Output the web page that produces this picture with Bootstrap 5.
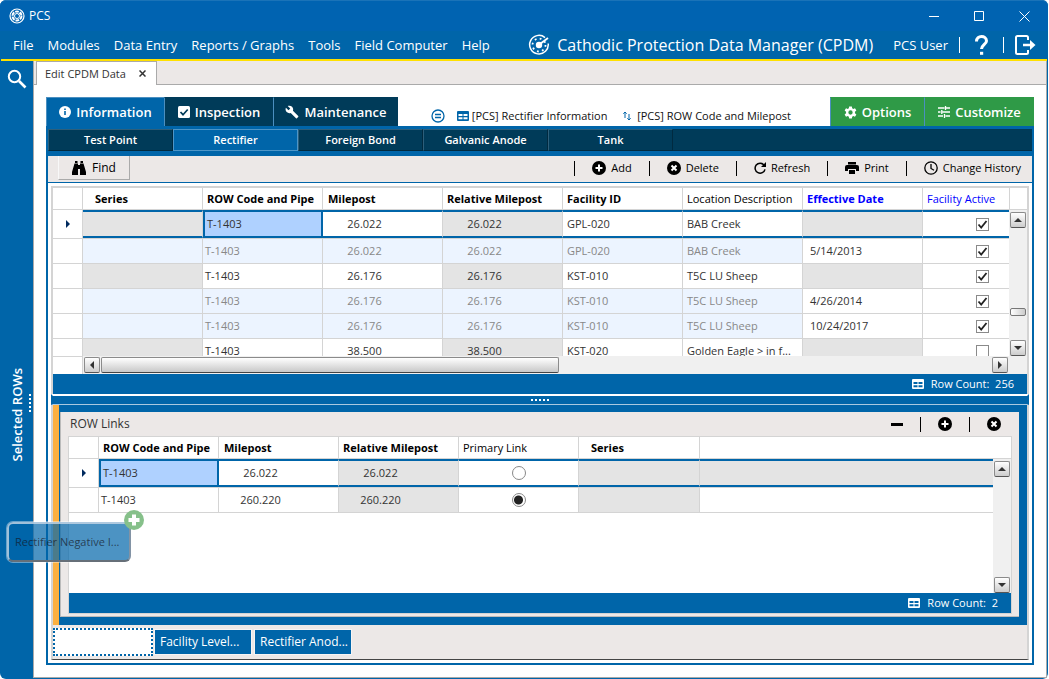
<!DOCTYPE html>
<html lang="en">
<head>
<meta charset="utf-8">
<meta name="viewport" content="width=device-width, initial-scale=1">
<title>PCS</title>
<link href="https://cdn.jsdelivr.net/npm/bootstrap@5.3.0/dist/css/bootstrap.min.css" rel="stylesheet">
<style>
:root{--blue:#0065a9;--navy:#003b59;--panel:#ece8e7;--line:#d4d4d4;--off:#e4e4e4;--pale:#ecf4ff}
body{font-family:"Open Sans","Noto Sans",sans-serif;font-size:11px;line-height:16px;color:#333;background:#fff}
button{font-family:inherit;border:0;background:none;padding:0;color:inherit}
svg{display:block;flex:none}
.window{min-height:100vh;background:var(--blue);border-radius:6px;padding:0 1px 1px 1px;border-right:1px solid #fff}
.titlebar{height:31px;background:#0063b1;margin:0 -1px;padding:0 18px 0 9px;border-top:1px solid #1a73b8;border-radius:6px 6px 0 0;color:#fff;font-size:12px}
.caption-buttons{gap:34px}
.menubar{height:28px;color:#fff;font-size:13px;padding:0 11px 0 12px}
.menubar a{color:#fff;text-decoration:none;white-space:nowrap}
.menus{gap:14px}
.product{font-size:16px;gap:7px;white-space:nowrap;margin-right:20px}
.usertools{gap:11px}
.vr-white{width:1px;height:16px;background:#fff}
.workspace{border-top:2px solid #ffe000}
.sidebar{width:32px;flex:none;color:#fff;font-size:13px;font-weight:600;position:relative}
.sidebar .find-row{height:36px}
.vert{writing-mode:vertical-rl;transform:rotate(180deg);white-space:nowrap}
.grip-v{width:2px;height:18px;position:absolute;right:2px;top:54%;background:repeating-linear-gradient(#fff 0 2px,transparent 2px 4px)}
.spacer-a{flex:5}.spacer-b{flex:4}
.doc{background:#fff;border-left:1px solid #aaa;border-bottom:1px solid #aaa;border-right:1px solid #aaa;min-width:0}
.docstrip{height:24px;background:var(--panel);border-bottom:1px solid #aaa;padding-left:2px}
.doctab{height:24px;width:121px;background:#fff;border:1px solid #aaa;border-bottom:0;font-size:11px;padding:0 10px 0 8px;color:#333}
.docbody{padding:12px}
.maintab{height:29px;background:var(--navy);color:#fff;font-size:13px;font-weight:600;border-left:1px solid #4b8fc0;border-top:1px solid var(--navy);gap:5px;justify-content:center;white-space:nowrap;flex:none}
.maintab.on{background:var(--blue);border-top-color:#4b8fc0}
.w-info{width:118px}.w-insp{width:109px}.w-main{width:125px}
.maintab.green{background:#2f9a47;border-top-color:#2f9a47}
.w-opt{width:94px}.w-cus{width:110px}
.links{font-size:11px;color:#111;padding:8px 0 0 33px}
.links a{color:#111;text-decoration:none;white-space:nowrap}
.frame{border:2px solid var(--blue);border-top-width:3px}
.subtabs{background:var(--navy);border-bottom:1px solid #002c45;height:22px}
.subtab{width:125px;height:22px;color:#fff;font-weight:600;font-size:11px;border:1px solid #2d5f7b;border-right-color:#002a40;border-bottom-color:#002a40}
.subtab.on{background:var(--blue);border-color:#4d96c8}
.toolbar{border-top:5px solid var(--blue);border-bottom:1px solid var(--blue);background:var(--panel);height:32px;padding:0 11px 0 10px;color:#000;font-size:11px}
.btn-find{width:72px;height:24px;border-right:1px solid #aaa;border-bottom:1px solid #aaa;border-left:1px solid #f8f8f8;gap:6px}
.btn-find,.childhead{font-size:12px}
.tools{gap:17px;height:24px}
.tool{gap:5px;white-space:nowrap}
.vr-black{width:1px;height:15px;background:#000}
.gridbox{border:2px solid var(--line);border-bottom:0;margin:3px 3px 0 3px}
.clip{height:168px;overflow:hidden}
.sheet{width:100%;table-layout:fixed;border-collapse:separate;border-spacing:0;font-size:11px}
.sheet th{height:22px;font-weight:700;color:#000;padding:0 0 0 4px;border:0 solid var(--line);border-width:0 1px 1px 0;white-space:nowrap}
.sheet td{height:25px;padding:0 0 0 4px;border:0 solid var(--line);border-width:0 1px 1px 0;white-space:nowrap;overflow:hidden;line-height:16px}
.sheet th.plain{font-weight:400}
.sheet th.dated{color:#00f}
.sheet th.wide{padding-left:12px}
.sheet th.mid{padding-left:5px}
.sheet .code{padding-left:2px}
.sheet .num{padding:0 36px 0 0;text-align:center}
.sheet .date{padding-left:7px}
.sheet .tick{padding-left:33px;text-align:center}
.sheet .edge{border-right:0}
.off{background:var(--off)}
.pale td.p{background:var(--pale);color:#888}
.cur td{height:28px;border-top:2px solid var(--blue);border-bottom:2px solid var(--blue)}
.cur td.rowhead{border-top:0;border-bottom:0}
.cur td.sel{background:#afd1ff;border:2px solid var(--blue)}
.after td{height:26px;border-top:1px solid var(--line)}
.rowhead svg{margin:auto}
.sheet td.rowhead{padding:0}
.sheet input{appearance:none;display:block;margin:0 auto;background:#fff center/11px no-repeat}
.sheet input[type=checkbox]{width:13px;height:13px;border:1px solid #8a8a8a}
.sheet input[type=checkbox]:checked{background-image:url("data:image/svg+xml,%3Csvg xmlns='http://www.w3.org/2000/svg' viewBox='0 0 11 11'%3E%3Cpath d='M1.500 5.500L4.200 8.500L9.500 2' fill='none' stroke='%23222' stroke-width='1.800'/%3E%3C/svg%3E")}
.sheet input[type=radio]{width:14px;height:14px;border:1px solid #888;border-radius:50%}
.sheet input[type=radio]:checked{background-image:radial-gradient(circle,#222 0 4px,transparent 5px)}
.scrollcol{width:18px;flex:none;background:#f0f0f0}
.scrollhead{height:22px;background:#fff;border-bottom:1px solid var(--line);border-left:1px solid var(--line);margin-bottom:2px}
.inner .scrollhead{border-left:0}
.sb{width:16px;height:16px;border:1px solid #8b8b8b;border-bottom-color:#555;border-radius:2px;background:linear-gradient(#fff,#ccc);display:flex;align-items:center;justify-content:center;flex:none}
.thumb-v{width:16px;height:8px;border:1px solid #777;border-radius:2px;background:linear-gradient(90deg,#fff,#ccc)}
.thumb-h{width:50%;height:16px;border:1px solid #8b8b8b;border-bottom-color:#444;border-radius:2px;background:linear-gradient(#fff,#c8c8c8)}
.hscroll{height:18px;background:#f0f0f0;padding-right:19px;gap:1px}
.hscroll .thumb-h{width:48%}
.corner{width:30px;height:18px;flex:none;background:#fff;border-right:1px solid var(--line);border-top:1px solid var(--line)}
.count{height:20px;background:var(--blue);color:#fff;font-size:11px;gap:7px;padding-right:13px}
.splitter{height:11px;background:var(--blue);border-top:2px solid #fff;border-bottom:1px solid #a9c9e0;margin:0 3px;border-left:2px solid var(--blue);border-right:2px solid var(--blue)}
.grip-h{width:18px;height:2px;background:repeating-linear-gradient(90deg,#fff 0 2px,transparent 2px 4px)}
.lower{margin:0 3px 3px;border:2px solid var(--line);border-top:0;border-bottom:1px solid #444;background:var(--panel)}
.child{border:solid var(--blue);border-width:7px 8px 8px 0}
.orange{width:6px;flex:none;background:#fbb040;margin:-7px 0 -8px}
.thinblue{width:2px;flex:none;background:var(--blue);border-right:1px solid #bbb}
.childpane{padding:0 7px 2px;border-bottom:1px solid #bbb}
.childhead{height:24px;padding:0 11px 0 2px}
.linktools{gap:17px}
.inner{border:1px solid var(--line);background:#fff}
.strip{height:34px;padding:3px 0 3px}
.slot{width:100px;height:28px;border:2px dotted var(--blue);background:#fff}
.chips{gap:4px;margin-left:2px}
.chip{width:96px;height:24px;background:var(--blue);color:#fff;font-size:12px;text-align:left;padding-left:5px;outline:1px solid #f6f4f4}
.ghost{position:absolute;left:7px;top:522px;width:124px;height:40px;border:2px solid rgba(200,215,230,.8);border-right-color:#8293a5;border-bottom-color:#666f78;border-radius:6px;background:rgba(0,101,169,.7);font-size:11px;line-height:36px;padding-left:6px;color:rgba(20,20,30,.7);box-shadow:0 0 0 1px rgba(255,255,255,.4)}
.ghost svg{position:absolute;right:-15px;top:-14px}
</style>
</head>
<body>
<svg width="0" height="0" class="position-absolute">
<defs>
<symbol id="i-table" viewBox="0 0 12 10"><path fill="currentColor" fill-rule="evenodd" d="M1 0h10a1 1 0 0 1 1 1v8a1 1 0 0 1-1 1H1a1 1 0 0 1-1-1V1a1 1 0 0 1 1-1zM1.500 3v2h4V3zm5 0v2h4V3zm-5 3.200v2h4v-2zm5 0v2h4v-2z"/></symbol>
<symbol id="i-plus" viewBox="0 0 14 14"><circle cx="7" cy="7" r="7"/><path d="M7 3.500v7M3.500 7h7" stroke="#fff" stroke-width="2"/></symbol>
<symbol id="i-x" viewBox="0 0 14 14"><circle cx="7" cy="7" r="7"/><path d="M4.500 4.500l5 5m0-5l-5 5" stroke="#fff" stroke-width="2"/></symbol>
<symbol id="i-up" viewBox="0 0 8 4"><path d="M0 4L4 0l4 4z" fill="#333"/></symbol>
<symbol id="i-down" viewBox="0 0 8 4"><path d="M0 0l4 4 4-4z" fill="#333"/></symbol>
<symbol id="i-left" viewBox="0 0 4 8"><path d="M4 0L0 4l4 4z" fill="#333"/></symbol>
<symbol id="i-right" viewBox="0 0 4 8"><path d="M0 0l4 4-4 4z" fill="#333"/></symbol>
<symbol id="i-row" viewBox="0 0 4 8"><path d="M0 0l4 4-4 4z" fill="#002a5e"/></symbol>
</defs>
</svg>
<div class="window d-flex flex-column">
  <header class="titlebar d-flex align-items-center justify-content-between">
    <div class="d-flex align-items-center gap-1">
      <svg width="16" height="16" viewBox="0 0 16 16" fill="none" stroke="#fff"><circle cx="8" cy="8" r="7" stroke-width="1.200"/><circle cx="8" cy="8" r="4.500" stroke-width="2" stroke-dasharray="3.700 1"/><circle cx="8" cy="8" r="2.500"/><path d="M9.500 6.500l3-2.500"/></svg>
      <span>PCS</span>
    </div>
    <div class="caption-buttons d-flex align-items-center">
      <button type="button" aria-label="Minimize"><svg width="11" height="11" stroke="#fff"><path d="M0 5.500h10"/></svg></button>
      <button type="button" aria-label="Maximize"><svg width="11" height="11" stroke="#fff" fill="none"><path d="M.5.5h9v9h-9z"/></svg></button>
      <button type="button" aria-label="Close"><svg width="11" height="11" stroke="#fff"><path d="M.5.5l10 10m0-10l-10 10"/></svg></button>
    </div>
  </header>
  <nav class="menubar d-flex align-items-center">
    <div class="menus d-flex me-auto">
      <a href="#">File</a><a href="#">Modules</a><a href="#">Data Entry</a><a href="#">Reports / Graphs</a><a href="#">Tools</a><a href="#">Field Computer</a><a href="#">Help</a>
    </div>
    <div class="product d-flex align-items-center">
      <svg width="22" height="22" viewBox="0 0 22 22" fill="none" stroke="#fff"><path d="M17 3.600A9.300 9.300 0 1 0 20.200 9.500" stroke-width="1.500"/><circle cx="11" cy="11" r="6.500" stroke-width="1.800" stroke-dasharray="1.800 3.300"/><circle cx="11" cy="11" r="3.200" fill="#fff" stroke="none"/><path d="M12 10l8-6" stroke-width="1.800"/></svg>
      <span>Cathodic Protection Data Manager (CPDM)</span>
    </div>
    <div class="usertools d-flex align-items-center">
      <a href="#">PCS User</a>
      <span class="vr-white"></span>
      <a href="#" aria-label="Help" class="px-1"><svg width="13" height="20" viewBox="0 0 13 20" fill="none" stroke="#fff" stroke-width="3"><path d="M1.500 6.500C1.500 3 4 1.500 6.500 1.500s5 1.500 5 4.500-5 4-5 8"/><path d="M5 18.300h3.200"/></svg></a>
      <span class="vr-white"></span>
      <a href="#" aria-label="Log out"><svg width="21" height="20" viewBox="0 0 21 20" fill="none" stroke="#fff" stroke-width="2"><path d="M13 5V2.500Q13 1 11.500 1h-9Q1 1 1 2.500v15Q1 19 2.500 19h9q1.500 0 1.500-1.500V15"/><path d="M8 10h9" stroke-width="2.500"/><path d="M15 5l5.500 5-5.500 5z" fill="#fff" stroke="none"/></svg></a>
    </div>
  </nav>
  <div class="workspace d-flex flex-grow-1">
    <aside class="sidebar d-flex flex-column align-items-center">
      <button type="button" class="find-row d-flex align-items-center" aria-label="Search"><svg width="20" height="20" viewBox="0 0 20 20" fill="none" stroke="#fff"><circle cx="7.500" cy="7.500" r="5.700" stroke-width="2"/><path d="M12 12l6.500 6.500" stroke-width="2.600"/></svg></button>
      <div class="spacer-a"></div>
      <div class="vert">Selected ROWs</div>
      <div class="spacer-b"></div>
      <div class="grip-v"></div>
    </aside>
    <main class="doc d-flex flex-column flex-grow-1">
      <div class="docstrip">
        <div class="doctab d-flex align-items-center justify-content-between"><span>Edit CPDM Data</span><button type="button" aria-label="Close tab"><svg width="7" height="7" stroke="#333" stroke-width="1.500"><path d="M.5.5l6 6m0-6l-6 6"/></svg></button></div>
      </div>
      <div class="docbody d-flex flex-column flex-grow-1">
        <div class="d-flex">
          <button type="button" class="maintab on w-info d-flex align-items-center"><svg width="12" height="12" viewBox="0 0 12 12"><circle cx="6" cy="6" r="6" fill="#fff"/><path d="M6 5v4M6 2.500v1.500" stroke="#0065a9" stroke-width="1.600"/></svg>Information</button>
          <button type="button" class="maintab w-insp d-flex align-items-center"><svg width="12" height="12" viewBox="0 0 12 12"><rect width="12" height="12" rx="1.500" fill="#fff"/><path d="M2.500 6l2.500 2.700L9.700 3.500" fill="none" stroke="#003b59" stroke-width="1.700"/></svg>Inspection</button>
          <button type="button" class="maintab w-main d-flex align-items-center"><svg width="14" height="14" viewBox="0 0 24 24" fill="#fff"><path d="M22.700 19l-9.100-9.100c.9-2.300.4-5-1.500-6.900-2-2-5-2.400-7.400-1.300L9 6 6 9 1.600 4.700C.4 7.100.9 10.100 2.900 12.100c1.900 1.900 4.600 2.400 6.900 1.500l9.100 9.100c.4.4 1 .4 1.400 0l2.300-2.300c.5-.4.5-1.100.1-1.400z"/></svg>Maintenance</button>
          <div class="links d-flex align-items-center flex-grow-1">
            <svg width="14" height="14" viewBox="0 0 14 14" fill="none" stroke="#0065a9" stroke-width="1.300"><circle cx="7" cy="7" r="6"/><path d="M4 5.500h6M4 8.500h6"/></svg>
            <a href="#" class="d-flex align-items-center ms-2 ps-1"><svg width="12" height="10" color="#0065a9"><use href="#i-table"/></svg><span>&nbsp;[PCS] Rectifier Information</span></a>
            <a href="#" class="d-flex align-items-center ms-3"><svg width="8" height="10" viewBox="0 0 8 10" fill="none" stroke="#0065a9"><path d="M2 7V1M.3 2.700L2 1l1.700 1.700M6 3v6M4.300 7.300L6 9l1.700-1.700"/></svg><span>&nbsp; [PCS] ROW Code and Milepost</span></a>
          </div>
          <button type="button" class="maintab green w-opt d-flex align-items-center"><svg width="13" height="13" viewBox="0 0 24 24" fill="#fff"><path fill-rule="evenodd" d="M9.500 1h5l.6 3.300 2 1.100 3.200-1.200 2.500 4.300-2.600 2.200v2.600l2.600 2.200-2.500 4.300-3.200-1.200-2 1.100-.6 3.300h-5l-.6-3.300-2-1.100-3.200 1.200-2.500-4.300 2.600-2.200v-2.600L1.200 8.500l2.500-4.300 3.200 1.200 2-1.100zM12 8a4 4 0 1 0 0 8 4 4 0 0 0 0-8z"/></svg>Options</button>
          <button type="button" class="maintab green w-cus d-flex align-items-center"><svg width="12" height="12" viewBox="0 0 12 12" stroke="#fff" stroke-width="1.300"><path d="M0 2h6.500M8 2h4M7.500 0v4M0 6h2.500M4.500 6H12M3.800 4v4M0 10h5M7.500 10H12M6.500 8v4"/></svg>Customize</button>
        </div>
        <section class="frame d-flex flex-column flex-grow-1">
          <div class="subtabs d-flex">
            <button type="button" class="subtab">Test Point</button><button type="button" class="subtab on">Rectifier</button><button type="button" class="subtab">Foreign Bond</button><button type="button" class="subtab">Galvanic Anode</button><button type="button" class="subtab">Tank</button>
          </div>
          <div class="toolbar d-flex justify-content-between align-items-start">
            <button type="button" class="btn-find d-flex align-items-center justify-content-center"><svg width="14" height="14" viewBox="0 0 14 14"><path d="M3 0h2.500v2H3zM8.500 0H11v2H8.500zM2.500 2.500H6V14H0v-3zM8 2.500h3.500L14 11v3H8zM6 4h2v4H6z"/></svg>Find</button>
            <div class="tools d-flex align-items-center">
              <span class="vr-black"></span>
              <button type="button" class="tool d-flex align-items-center"><svg width="14" height="14"><use href="#i-plus"/></svg>Add</button>
              <span class="vr-black"></span>
              <button type="button" class="tool d-flex align-items-center"><svg width="14" height="14"><use href="#i-x"/></svg>Delete</button>
              <span class="vr-black"></span>
              <button type="button" class="tool d-flex align-items-center"><svg width="12" height="12" viewBox="0 0 12 12"><path d="M10 3A5 5 0 1 0 11 7.300" fill="none" stroke="#000" stroke-width="1.500"/><path d="M12 0v5H7z"/></svg>Refresh</button>
              <span class="vr-black"></span>
              <button type="button" class="tool d-flex align-items-center"><svg width="14" height="12" viewBox="0 0 14 12"><path d="M3 0h8v2.500H3zM2 3h10q2 0 2 2v4h-3V7H3v2H0V5q0-2 2-2zM4 8h6v4H4z"/></svg>Print</button>
              <span class="vr-black"></span>
              <button type="button" class="tool d-flex align-items-center"><svg width="14" height="14" viewBox="0 0 14 14" fill="none" stroke="#000" stroke-width="1.300"><circle cx="7" cy="7" r="6.200"/><path d="M7 3v4.500l3 1.800"/></svg>Change History</button>
            </div>
          </div>
          <div class="gridbox">
            <div class="clip d-flex">
              <div class="flex-grow-1">
              <table class="sheet">
                <colgroup><col style="width:30px"><col style="width:120px"><col style="width:120px"><col style="width:120px"><col style="width:120px"><col style="width:120px"><col style="width:120px"><col style="width:120px"><col></colgroup>
                <thead><tr><th></th><th class="wide">Series</th><th>ROW Code and Pipe</th><th class="mid">Milepost</th><th>Relative Milepost</th><th>Facility ID</th><th class="plain">Location Description</th><th class="dated">Effective Date</th><th class="plain dated edge">Facility Active</th></tr></thead>
                <tbody>
                <tr class="cur"><td class="rowhead"><svg width="4" height="8"><use href="#i-row"/></svg></td><td class="off"></td><td class="code sel">T-1403</td><td class="num">26.022</td><td class="num off">26.022</td><td>GPL-020</td><td>BAB Creek</td><td class="off"></td><td class="tick edge"><input type="checkbox" checked aria-label="Facility Active"></td></tr>
                <tr class="pale after"><td></td><td class="p"></td><td class="code p">T-1403</td><td class="num p">26.022</td><td class="num p">26.022</td><td class="p">GPL-020</td><td class="p">BAB Creek</td><td class="date">5/14/2013</td><td class="tick edge"><input type="checkbox" checked aria-label="Facility Active"></td></tr>
                <tr><td></td><td class="off"></td><td class="code">T-1403</td><td class="num">26.176</td><td class="num off">26.176</td><td>KST-010</td><td>T5C LU Sheep</td><td class="off"></td><td class="tick edge"><input type="checkbox" checked aria-label="Facility Active"></td></tr>
                <tr class="pale"><td></td><td class="p"></td><td class="code p">T-1403</td><td class="num p">26.176</td><td class="num p">26.176</td><td class="p">KST-010</td><td class="p">T5C LU Sheep</td><td class="date">4/26/2014</td><td class="tick edge"><input type="checkbox" checked aria-label="Facility Active"></td></tr>
                <tr class="pale"><td></td><td class="p"></td><td class="code p">T-1403</td><td class="num p">26.176</td><td class="num p">26.176</td><td class="p">KST-010</td><td class="p">T5C LU Sheep</td><td class="date">10/24/2017</td><td class="tick edge"><input type="checkbox" checked aria-label="Facility Active"></td></tr>
                <tr><td></td><td class="off"></td><td class="code">T-1403</td><td class="num">38.500</td><td class="num off">38.500</td><td>KST-020</td><td>Golden Eagle &gt; in f...</td><td class="off"></td><td class="tick edge"><input type="checkbox" aria-label="Facility Active"></td></tr>
                </tbody>
              </table>
              </div>
              <div class="scrollcol d-flex flex-column align-items-center">
                <div class="scrollhead w-100 flex-shrink-0"></div>
                <button type="button" class="sb mb-auto" aria-label="Scroll up"><svg width="8" height="4"><use href="#i-up"/></svg></button>
                <div class="thumb-v mb-4"></div>
                <button type="button" class="sb" aria-label="Scroll down"><svg width="8" height="4"><use href="#i-down"/></svg></button>
              </div>
            </div>
            <div class="hscroll d-flex align-items-center">
              <div class="corner"></div>
              <button type="button" class="sb" aria-label="Scroll left"><svg width="4" height="8"><use href="#i-left"/></svg></button>
              <div class="thumb-h"></div>
              <button type="button" class="sb ms-auto" aria-label="Scroll right"><svg width="4" height="8"><use href="#i-right"/></svg></button>
            </div>
            <div class="count d-flex align-items-center justify-content-end"><svg width="12" height="10"><use href="#i-table"/></svg><span>Row Count:&nbsp; 256</span></div>
          </div>
          <div class="splitter d-flex justify-content-center align-items-center"><div class="grip-h"></div></div>
          <div class="lower d-flex flex-column flex-grow-1">
            <div class="child d-flex flex-grow-1">
              <div class="orange"></div><div class="thinblue"></div>
              <div class="childpane d-flex flex-column flex-grow-1">
                <div class="childhead d-flex align-items-center justify-content-between"><span>ROW Links</span>
                  <div class="linktools d-flex align-items-center">
                    <button type="button" aria-label="Collapse"><svg width="12" height="3"><path d="M0 0h12v3H0z"/></svg></button><span class="vr-black"></span>
                    <button type="button" aria-label="Add link"><svg width="14" height="14"><use href="#i-plus"/></svg></button><span class="vr-black"></span>
                    <button type="button" aria-label="Delete link"><svg width="14" height="14"><use href="#i-x"/></svg></button>
                  </div>
                </div>
                <div class="inner d-flex flex-column flex-grow-1">
                  <div class="d-flex flex-grow-1">
                    <div class="flex-grow-1">
                    <table class="sheet">
                      <colgroup><col style="width:30px"><col style="width:120px"><col style="width:120px"><col style="width:120px"><col style="width:120px"><col style="width:121px"><col></colgroup>
                      <thead><tr><th></th><th>ROW Code and Pipe</th><th class="mid">Milepost</th><th>Relative Milepost</th><th class="plain">Primary Link</th><th class="wide">Series</th><th class="edge"></th></tr></thead>
                      <tbody>
                      <tr class="cur"><td class="rowhead"><svg width="4" height="8"><use href="#i-row"/></svg></td><td class="code sel">T-1403</td><td class="num">26.022</td><td class="num off">26.022</td><td class="p-0"><input type="radio" name="primary" aria-label="Primary link 26.022"></td><td class="off"></td><td class="off edge"></td></tr>
                      <tr class="after"><td></td><td class="code">T-1403</td><td class="num">260.220</td><td class="num off">260.220</td><td class="p-0"><input type="radio" name="primary" checked aria-label="Primary link 260.220"></td><td class="off"></td><td class="edge"></td></tr>
                      </tbody>
                    </table>
                    </div>
                    <div class="scrollcol d-flex flex-column align-items-center">
                      <div class="scrollhead w-100 flex-shrink-0"></div>
                      <button type="button" class="sb mb-auto" aria-label="Scroll up"><svg width="8" height="4"><use href="#i-up"/></svg></button>
                      <button type="button" class="sb" aria-label="Scroll down"><svg width="8" height="4"><use href="#i-down"/></svg></button>
                    </div>
                  </div>
                  <div class="count d-flex align-items-center justify-content-end"><svg width="12" height="10"><use href="#i-table"/></svg><span>Row Count:&nbsp; 2</span></div>
                </div>
              </div>
            </div>
            <div class="strip d-flex align-items-center">
              <div class="slot"></div>
              <div class="chips d-flex">
                <button type="button" class="chip">Facility Level...</button>
                <button type="button" class="chip">Rectifier Anod...</button>
              </div>
            </div>
          </div>
        </section>
      </div>
    </main>
  </div>
</div>
<div class="ghost">Rectifier Negative I...<svg width="20" height="20" viewBox="0 0 20 20"><circle cx="10" cy="10" r="10" fill="#86c08a"/><path d="M10 4.500v11M4.500 10h11" stroke="#fff" stroke-width="4"/></svg></div>
<script src="https://cdn.jsdelivr.net/npm/bootstrap@5.3.0/dist/js/bootstrap.bundle.min.js"></script>
</body>
</html>
